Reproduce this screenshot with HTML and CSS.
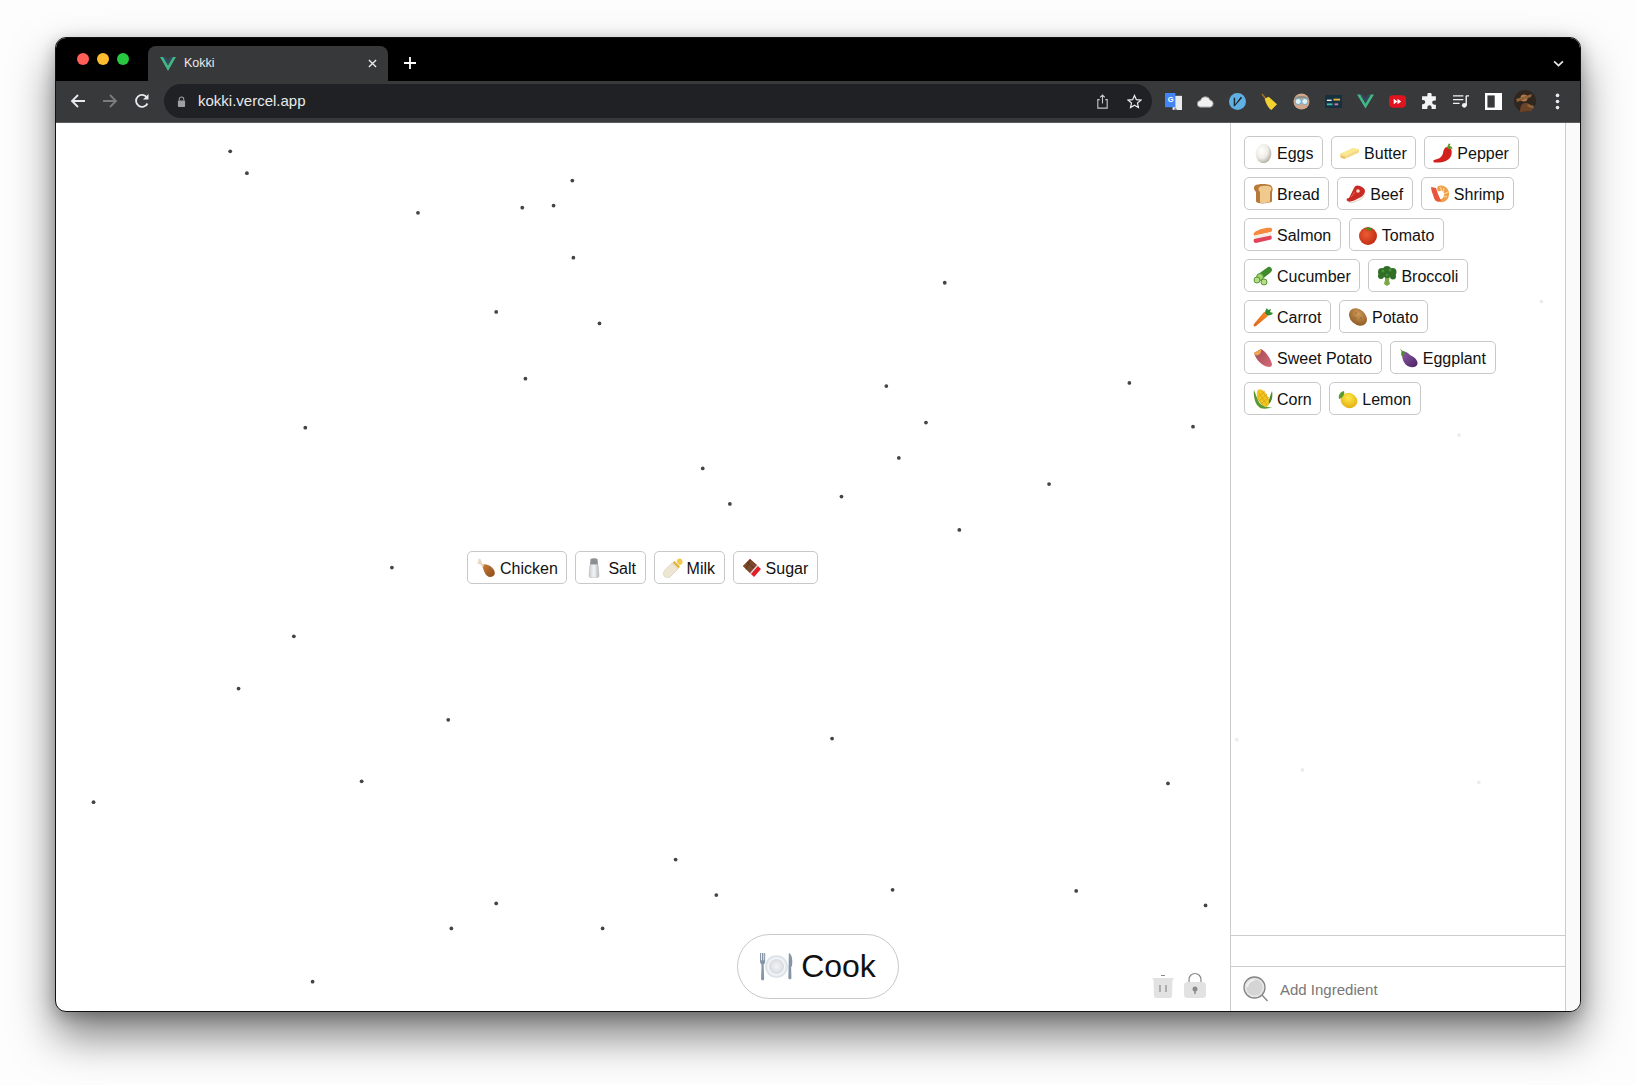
FILE: index.html
```html
<!DOCTYPE html>
<html lang="en">
<head>
    <meta charset="UTF-8">
    <title>Kokki</title>
    <link rel="stylesheet" href="styles.css">
</head>
<body>
    <!-- emoji drawn once, used by every chip -->
    <svg class="sprites" width="0" height="0">
        <defs>
            <radialGradient id="g-egg" cx="38%" cy="35%" r="72%"><stop offset="0" stop-color="#fff"/><stop offset=".55" stop-color="#eeece6"/><stop offset="1" stop-color="#aaa69c"/></radialGradient>
            <radialGradient id="g-tomato" cx="40%" cy="40%" r="70%"><stop offset="0" stop-color="#ee5a33"/><stop offset="1" stop-color="#b9290f"/></radialGradient>
            <radialGradient id="g-potato" cx="40%" cy="35%" r="75%"><stop offset="0" stop-color="#cf9a5a"/><stop offset="1" stop-color="#87541f"/></radialGradient>
            <radialGradient id="g-lemon" cx="40%" cy="35%" r="75%"><stop offset="0" stop-color="#ffe84d"/><stop offset="1" stop-color="#e0aa08"/></radialGradient>
            <radialGradient id="g-plate" cx="50%" cy="50%" r="50%"><stop offset="0" stop-color="#f2f4f6"/><stop offset=".62" stop-color="#d9dde2"/><stop offset=".7" stop-color="#f6f7f9"/><stop offset="1" stop-color="#d3dae4"/></radialGradient>
            <linearGradient id="g-drum" x1="0" y1="0" x2="1" y2="1"><stop offset="0" stop-color="#c9803c"/><stop offset="1" stop-color="#8c4a17"/></linearGradient>
            <linearGradient id="g-eggplant" x1="0" y1="0" x2="1" y2="1"><stop offset="0" stop-color="#8c5ba8"/><stop offset="1" stop-color="#4a2360"/></linearGradient>
            <linearGradient id="g-sweet" x1="0" y1="0" x2="1" y2="1"><stop offset="0" stop-color="#9c4a55"/><stop offset="1" stop-color="#d86a78"/></linearGradient>
            <linearGradient id="g-carrot" x1="1" y1="0" x2="0" y2="1"><stop offset="0" stop-color="#f58a2a"/><stop offset="1" stop-color="#e2641a"/></linearGradient>
            <linearGradient id="g-salt" x1="0" y1="0" x2="1" y2="0"><stop offset="0" stop-color="#c9ccd0"/><stop offset=".5" stop-color="#f4f5f6"/><stop offset="1" stop-color="#b4b8bc"/></linearGradient>
        </defs>
        <symbol id="egg" viewBox="0 0 20 20"><ellipse cx="10.500" cy="10.500" rx="7.800" ry="9.700" fill="url(#g-egg)"/></symbol>
        <symbol id="butter" viewBox="0 0 20 20"><path d="M0 11l13-6 6 1.500v3L6 15.500 1 14z" fill="#f3d98a"/><path d="M0 11l13-6 6 1.500L6 12.500z" fill="#fbe98f"/><path d="M0 12.500l5 1.500v2l-4-1z" fill="#eac25c"/></symbol>
        <symbol id="pepper" viewBox="0 0 20 20"><path d="M14 4c4 0 6 4 4 9-2 5-9 7-16 6.500-2 0-2-2-1-2.500 5-1 8-3 9-7 .5-3 2-6 4-6z" fill="#d3201c"/><path d="M14 5c.5-2 1-3.500 2-4.500l1.500.5-1 2c1.500 0 3 1 3 3.500-1-1-3-1.500-4-.5z" fill="#5d9a2e"/></symbol>
        <symbol id="bread" viewBox="0 0 20 20"><path d="M2 1.500c3-2 13-2 16 0 2 2 2 5 1 6.500v9.500c-2 2-15 3-16 0V8C1 6 0 3.500 2 1.500z" fill="#b77a38"/><path d="M7 2.500c3-1 9-1 11 .5 1 1.500 0 3.500-1 5v9.500c-2 1.500-8 2-10 1V8C5 6 5 4 7 2.500z" fill="#efc98e"/></symbol>
        <symbol id="beef" viewBox="0 0 20 20"><path d="M1 17c-1-2 0-3 2-3l5-10c1-3 4-3 6-2 3 1 5 3 5 5 0 3-3 6-6 7-4 2-9 5-12 3z" fill="#c92a24"/><path d="M1 16c1 2 4 3 8 1 4-1 8-3 10-8 0 4-3 7-7 8-4 2-8 3-10 1z" fill="#e8d8c8"/><circle cx="12" cy="7" r="1.800" fill="#f5dcc8"/><path d="M5 13l4-5" stroke="#e86a58" stroke-width="1"/></symbol>
        <symbol id="shrimp" viewBox="0 0 20 20"><path d="M8 2c6-2 11 2 11 8s-5 9-9 8c-2-1-2-3 0-3 3 0 4-2 4-5s-2-4-4-3C8 8 6 6 8 2z" fill="#f0a04b"/><path d="M1 3l5 1 2 6 3 7c-3 2-6 0-7-3-1-4-3-7-3-11z" fill="#e8553a"/><path d="M10 3l2 4M14 4l-1 4M18 8l-4 2M17 13l-4-1" stroke="#fbd79a" stroke-width="1.200"/></symbol>
        <symbol id="salmon" viewBox="0 0 20 20"><path d="M1 8c2-3 13-6 17-5 2 1 1 3 0 4L2 11c-1 0-2-2-1-3z" fill="#f58a3e"/><path d="M1 10.500l17-3.500c1 1 1 3 0 3.500L3 14c-1 0-3-2-2-3.500z" fill="#f6efe6"/><path d="M1 14l17-3.500c1 1.500 1 3 0 4L3 18c-2 0-3-2-2-4z" fill="#e0435a"/></symbol>
        <symbol id="tomato" viewBox="0 0 20 20"><circle cx="10" cy="11" r="9" fill="url(#g-tomato)"/><path d="M10 2l2 1 3 0-2 1.500 1 2-3-1.500-2 1.500 0-2-3-1 3-.5z" fill="#4e8a24"/></symbol>
        <symbol id="cucumber" viewBox="0 0 20 20"><path d="M4 9L15 1c2-1 4 1 4 3 0 1-1 2-2 3L8 14z" fill="#3f8a2c"/><circle cx="7" cy="11" r="3.400" fill="#a6d173" stroke="#4f9a33"/><circle cx="4" cy="14" r="3" fill="#b7dc85" stroke="#4f9a33"/><circle cx="11" cy="16" r="3" fill="#b7dc85" stroke="#4f9a33"/></symbol>
        <symbol id="broccoli" viewBox="0 0 20 20"><path d="M8 10h5l-1 4 1 4-3 2-3-2 1-4z" fill="#78a945"/><g fill="#2f6e26"><circle cx="5" cy="6" r="4"/><circle cx="10" cy="4" r="4"/><circle cx="15.500" cy="6" r="4"/><circle cx="4" cy="10" r="3"/><circle cx="16" cy="10.500" r="3"/><circle cx="10" cy="8.500" r="3.500"/></g><g fill="#4d9238"><circle cx="6" cy="5" r="1.500"/><circle cx="13" cy="4" r="1.500"/><circle cx="10" cy="9" r="1.300"/></g></symbol>
        <symbol id="carrot" viewBox="0 0 20 20"><path d="M11 5c2 0 4 2 4 4L3 19c-2 1-3 0-2-2z" fill="url(#g-carrot)"/><path d="M12 6c0-2 1-4 2-5l1 2 3-1-1 3 3 1c-1 2-4 3-6 2z" fill="#2e8b35"/></symbol>
        <symbol id="potato" viewBox="0 0 20 20"><ellipse cx="10" cy="10" rx="10" ry="7.500" transform="rotate(42 10 10)" fill="url(#g-potato)"/><g fill="#6d4318"><circle cx="8" cy="6" r=".6"/><circle cx="13" cy="11" r=".6"/><circle cx="7" cy="11" r=".6"/></g></symbol>
        <symbol id="sweet" viewBox="0 0 20 20"><path d="M1 5l7-4c4 2 9 8 11 15 0 2-1 3-3 3C9 18 3 12 1 5z" fill="url(#g-sweet)"/><path d="M1 5l7-4c1 2-1 6-3 6-2 1-3 0-4-2z" fill="#f2a64e"/></symbol>
        <symbol id="eggplant" viewBox="0 0 20 20"><path d="M4 4c3-1 5 1 7 3 2 1 6 3 7 6 2 4-2 7-6 6-4 0-7-4-8-7-1-2-1-5 0-8z" fill="url(#g-eggplant)"/><path d="M1 .5l2.500 2.500C5.500 3 7 4 7 5.500 6 5 5 5.500 4.500 6.500 4.500 8 4 9 3 8.500 2 7 2 5 2.500 3.500z" fill="#4e8a2c"/></symbol>
        <symbol id="corn" viewBox="0 0 20 20"><ellipse cx="10" cy="9" rx="5" ry="9.500" transform="rotate(-28 10 9)" fill="#f2c51f"/><path d="M6 4l8 12M9 2l8 11M4 8l7 10M6 12l8-7M8 15l8-7M5 8l7-6" stroke="#cf9a10" stroke-width=".6"/><path d="M1 1c2 5 3 8 5 12 2 3 6 6 13 5-4 2-11 3-14-1C2 14 0 6 1 1z" fill="#5d9a2e"/><path d="M19 2c1 5 0 10-3 13-1-2 1-8 3-13z" fill="#4a8a28"/></symbol>
        <symbol id="lemon" viewBox="0 0 20 20"><ellipse cx="11" cy="11.500" rx="8.500" ry="7.500" transform="rotate(25 11 11.500)" fill="url(#g-lemon)"/><path d="M1 10C0 6 2 3 6 2c1 3-1 7-5 8z" fill="#5d9a2e"/></symbol>
        <symbol id="chicken" viewBox="0 0 20 20"><path d="M6 7c3-2 9 0 12 5 2 4 0 7-4 7-4 0-6-5-8-12z" fill="url(#g-drum)"/><path d="M3 .5c1 0 2 1 2 2 1 .5 1 1.500.5 2L8 7.500 6.500 9.500 4 6c-1 .5-2.500 0-2.500-1S2 3.500 2.500 3c0-1 0-2.500.5-2.500z" fill="#e6d8c4"/></symbol>
        <symbol id="salt" viewBox="0 0 20 20"><path d="M6.500 1c2-1 5-1 7 0l.5 5.500H6z" fill="#8b8f94"/><path d="M6 6.500h8l1 12c-1 1.800-9 1.800-10 0z" fill="url(#g-salt)" stroke="#a8acb0" stroke-width=".5"/></symbol>
        <symbol id="milk" viewBox="0 0 20 20"><path d="M9 5l6 6-7 7c-2 2-5 2-6.500.5C0 17 0 14 2 12z" fill="#ece6d2" stroke="#c9c2ab" stroke-width=".5"/><path d="M9.500 4.500l6 6 1.500-2-5.500-5.500z" fill="#e3b23c"/><path d="M13.500 3.500C14 1 16 0 18 1s2 4 .5 5.500L16 7z" fill="#f2c94c"/></symbol>
        <symbol id="sugar" viewBox="0 0 20 20"><path d="M1 8l7-7 11 10-7 8z" fill="#e01f26"/><path d="M1 8l7-7 7 6-7 8z" fill="#7a4a2c"/><path d="M5 4l7 6M8 1.500l-4 10" stroke="#4f2e1a" stroke-width=".7"/><path d="M8 15l7-8 1 1-7 8z" fill="#ddd"/></symbol>
        <symbol id="plate" viewBox="0 0 34 32"><circle cx="17" cy="16" r="11" fill="url(#g-plate)"/><path d="M1 3v8c0 2 1 3 1.500 3l-.5 14c0 2 3 2 3 0l-.5-14c.5 0 1.500-1 1.500-3V3H5v7H4.300V3H2.800v7H2V3z" fill="#8595a8"/><path d="M29 3c3 1 4 7 3 13h-.8l.3 11c0 2-3 2-3 0z" fill="#8595a8"/></symbol>
        <symbol id="glass" viewBox="0 0 26 26"><circle cx="11.500" cy="11.500" r="10.500" fill="#e6e6e6" stroke="#858585" stroke-width="1.300"/><circle cx="11.500" cy="11.500" r="8" fill="#d5d5d5"/><path d="M4.500 11c0-4 3-7 7-7" fill="none" stroke="#f5f5f5" stroke-width="1.500"/><path d="M19 19l5.500 6" stroke="#8a8a8a" stroke-width="1.500"/></symbol>
    </svg>

    <div class="window">
        <div class="tab-strip">
            <div class="lights">
                <span class="light red"></span>
                <span class="light yellow"></span>
                <span class="light green"></span>
            </div>
            <div class="tab">
                <svg class="favicon" viewBox="0 0 16 14"><path d="M0 0h3.200L8 8.200 12.800 0H16L8 14z" fill="#41b883"/><path d="M3.200 0h2.900L8 3.400 9.900 0h2.900L8 8.200z" fill="#35495e"/></svg>
                <span class="tab-title">Kokki</span>
                <svg class="tab-close" viewBox="0 0 10 10"><path d="M1 1l8 8M9 1l-8 8" stroke="#e8eaed" stroke-width="1.500"/></svg>
            </div>
            <svg class="new-tab" viewBox="0 0 12 12"><path d="M6 0v12M0 6h12" stroke="#fff" stroke-width="1.800"/></svg>
            <svg class="tab-menu" viewBox="0 0 10 6"><path d="M1 1l4 4 4-4" fill="none" stroke="#e8eaed" stroke-width="1.500"/></svg>
        </div>

        <div class="toolbar">
            <svg class="nav" viewBox="0 0 16 16"><path d="M15 8H2M8 2L2 8l6 6" fill="none" stroke="#e8eaed" stroke-width="1.800"/></svg>
            <svg class="nav" viewBox="0 0 16 16"><path d="M1 8h13M8 2l6 6-6 6" fill="none" stroke="#7b7c7e" stroke-width="1.800"/></svg>
            <svg class="nav" viewBox="0 0 16 16"><path d="M13.500 10.500A6 6 0 1 1 13 4.500" fill="none" stroke="#e8eaed" stroke-width="1.800"/><path d="M14.500 1v5.500H9z" fill="#e8eaed"/></svg>
            <div class="address">
                <svg class="lock" viewBox="0 0 10 12"><path d="M2.500 5V3.500a2.500 2.500 0 0 1 5 0V5" fill="none" stroke="#9aa0a6" stroke-width="1.200"/><rect x="1" y="5" width="8" height="7" rx="1" fill="#9aa0a6"/></svg>
                <span class="url">kokki.vercel.app</span>
                <svg class="addr-icon share" viewBox="0 0 14 16"><path d="M4 6H2v9h10V6h-2M7 10V1M4.500 3.500L7 1l2.500 2.500" fill="none" stroke="#c4c6c9" stroke-width="1.200"/></svg>
                <svg class="addr-icon" viewBox="0 0 16 16"><path d="M8 1.500l2 4.500 4.800.5-3.600 3.200 1 4.800L8 12l-4.200 2.500 1-4.800L1.200 6.500 6 6z" fill="none" stroke="#e8eaed" stroke-width="1.300"/></svg>
            </div>
            <div class="extensions">
                <span class="ext"><svg viewBox="0 0 18 18"><rect x="8" y="3" width="10" height="15" fill="#e8eaed"/><path d="M0 0h11v15H0z" fill="#4285f4"/><text class="ext-g" x="3" y="9">G</text><path d="M11 15l-2 3h4z" fill="#8a8f96"/></svg></span>
                <span class="ext"><svg viewBox="0 0 18 14"><path d="M4 13a3.500 3.500 0 0 1-.5-7A5.500 5.500 0 0 1 14 5.500a3.800 3.800 0 0 1 0 7.500z" fill="#f1f1f1" stroke="#888" stroke-width="1"/></svg></span>
                <span class="ext"><svg viewBox="0 0 18 18"><circle cx="9" cy="9" r="9" fill="#5fb0e5"/><path d="M5 5h1.500v7l6-8 1.500 1-8 9H5z" fill="#20272c"/></svg></span>
                <span class="ext"><svg viewBox="0 0 18 18"><path d="M1 1l5 6" stroke="#a8741f" stroke-width="1.600"/><path d="M4 6l4-2 9 8-6 6c-3-2-6-7-7-12z" fill="#f2d22e"/></svg></span>
                <span class="ext"><svg viewBox="0 0 18 18"><circle cx="9" cy="9" r="8.500" fill="#d0a68c"/><path d="M1 7c1-5 15-5 16 0-4-2-12-2-16 0z" fill="#8c8c84"/><circle cx="5.500" cy="9" r="3.200" fill="#dff1f7" stroke="#6aa7c0"/><circle cx="12.500" cy="9" r="3.200" fill="#dff1f7" stroke="#6aa7c0"/></svg></span>
                <span class="ext"><svg viewBox="0 0 18 14"><rect width="18" height="14" rx="1" fill="#15303f"/><rect x="9" y="4" width="7" height="2" fill="#e8b23a"/><rect x="2" y="5" width="5" height="1.500" fill="#e8eaed"/><rect x="2" y="9" width="6" height="2" fill="#3fb6b0"/><rect x="10" y="9" width="4" height="2" fill="#c77fb0"/></svg></span>
                <span class="ext"><svg viewBox="0 0 18 15"><path d="M0 0h3.500L9 9.500 14.500 0H18L9 15z" fill="#41b883"/><path d="M3.500 0h3L9 4.500 11.500 0h3L9 9.500z" fill="#35495e"/></svg></span>
                <span class="ext"><svg viewBox="0 0 18 14"><rect width="18" height="13" y=".5" rx="4" fill="#e0141f"/><path d="M5 4l4 3-4 3zM9 4l4 3-4 3z" fill="#fff"/></svg></span>
                <span class="ext"><svg viewBox="0 0 16 16"><path d="M6 1.500a2 2 0 0 1 4 0V3h4v4h-1.500a2 2 0 0 0 0 4H14v4h-4v-1.500a2 2 0 0 0-4 0V15H1v-4.500h1a2 2 0 0 0 0-4H1V3h5z" fill="#f1f3f4"/></svg></span>
                <span class="ext"><svg viewBox="0 0 18 14"><path d="M0 1h11M0 5h11M0 9h7" stroke="#f1f3f4" stroke-width="1.500"/><path d="M14 1v10" stroke="#f1f3f4" stroke-width="1.500"/><path d="M14 1h3" stroke="#f1f3f4" stroke-width="1.500"/><circle cx="12" cy="11" r="2.500" fill="#f1f3f4"/></svg></span>
                <span class="ext"><svg viewBox="0 0 14 14"><path d="M0 0h14v14H0z" fill="#fff"/><rect x="2" y="2" width="6" height="10" fill="#38393b"/></svg></span>
                <span class="ext avatar-wrap"><svg viewBox="0 0 22 22"><circle cx="11" cy="11" r="11" fill="#2f2620"/><path d="M6 22c0-8 3-9 6-9s6 2 6 8z" fill="#6b4428"/><circle cx="10" cy="8" r="3.500" fill="#b57a48"/><path d="M2 9l16-5-1 3-14 5zM14 14l6 2-1 3-6-3z" fill="#8d6238"/></svg></span>
                <span class="ext"><svg viewBox="0 0 4 14"><circle cx="2" cy="2" r="1.500" fill="#e8eaed"/><circle cx="2" cy="7" r="1.500" fill="#e8eaed"/><circle cx="2" cy="12" r="1.500" fill="#e8eaed"/></svg></span>
            </div>
        </div>

        <div class="content">
            <!-- stray dots of the background, in the coordinates of the whole view -->
            <svg class="dots" viewBox="53 118 1461 851">
                <g fill="#444">
                    <circle cx="220" cy="145" r="1.800"/><circle cx="236" cy="166" r="1.800"/><circle cx="548" cy="173" r="1.800"/>
                    <circle cx="400" cy="204" r="1.800"/><circle cx="500" cy="199" r="1.800"/><circle cx="530" cy="197" r="1.800"/>
                    <circle cx="549" cy="247" r="1.800"/><circle cx="475" cy="299" r="1.800"/><circle cx="574" cy="310" r="1.800"/>
                    <circle cx="905" cy="271" r="1.800"/><circle cx="503" cy="363" r="1.800"/><circle cx="849" cy="370" r="1.800"/>
                    <circle cx="1082" cy="367" r="1.800"/><circle cx="292" cy="410" r="1.800"/><circle cx="887" cy="405" r="1.800"/>
                    <circle cx="1143" cy="409" r="1.800"/><circle cx="861" cy="439" r="1.800"/><circle cx="673" cy="449" r="1.800"/>
                    <circle cx="699" cy="483" r="1.800"/><circle cx="806" cy="476" r="1.800"/><circle cx="1005" cy="464" r="1.800"/>
                    <circle cx="919" cy="508" r="1.800"/><circle cx="375" cy="544" r="1.800"/><circle cx="281" cy="610" r="1.800"/>
                    <circle cx="228" cy="660" r="1.800"/><circle cx="429" cy="690" r="1.800"/><circle cx="797" cy="708" r="1.800"/>
                    <circle cx="346" cy="749" r="1.800"/><circle cx="1119" cy="751" r="1.800"/><circle cx="89" cy="769" r="1.800"/>
                    <circle cx="647" cy="824" r="1.800"/><circle cx="686" cy="858" r="1.800"/><circle cx="855" cy="853" r="1.800"/>
                    <circle cx="1031" cy="854" r="1.800"/><circle cx="475" cy="866" r="1.800"/><circle cx="432" cy="890" r="1.800"/>
                    <circle cx="577" cy="890" r="1.800"/><circle cx="1155" cy="868" r="1.800"/><circle cx="299" cy="941" r="1.800"/>
                </g>
                <g fill="#ececec">
                    <circle cx="1477" cy="289" r="1.800"/><circle cx="1398" cy="417" r="1.800"/><circle cx="1185" cy="709" r="1.800"/>
                    <circle cx="1248" cy="738" r="1.800"/><circle cx="1417" cy="750" r="1.800"/>
                </g>
            </svg>

            <div class="canvas">
                <div class="pot">
                    <div class="chip"><svg class="emoji"><use href="#chicken"/></svg>Chicken</div>
                    <div class="chip"><svg class="emoji"><use href="#salt"/></svg>Salt</div>
                    <div class="chip"><svg class="emoji"><use href="#milk"/></svg>Milk</div>
                    <div class="chip"><svg class="emoji"><use href="#sugar"/></svg>Sugar</div>
                </div>
                <button class="cook" type="button"><svg class="cook-icon"><use href="#plate"/></svg>Cook</button>
                <div class="tools">
                    <svg class="tool" viewBox="0 0 22 24"><path d="M9 1.500h4" stroke="#8a8a8a" stroke-width="1"/><path d="M0 4h22l-1.500 2-.5 16c0 1-1 2-2 2H4c-1 0-2-1-2-2L1.500 6z" fill="#e2e2e2"/><path d="M8 11v7M14 11v7" stroke="#8a8a8a" stroke-width="1.200"/></svg>
                    <svg class="tool" viewBox="0 0 22 26"><path d="M5 12V7.500a6 6 0 0 1 12 0V10" fill="none" stroke="#8a8a8a" stroke-width="1.200"/><rect y="10" width="22" height="16" rx="3.500" fill="#e2e2e2"/><circle cx="11" cy="17" r="2.500" fill="#8a8a8a"/><path d="M11 18v4" stroke="#8a8a8a" stroke-width="1.500"/></svg>
                </div>
            </div>

            <aside class="sidebar">
                <div class="ingredients">
                    <div class="chip"><svg class="emoji"><use href="#egg"/></svg>Eggs</div>
                    <div class="chip"><svg class="emoji"><use href="#butter"/></svg>Butter</div>
                    <div class="chip"><svg class="emoji"><use href="#pepper"/></svg>Pepper</div>
                    <div class="chip"><svg class="emoji"><use href="#bread"/></svg>Bread</div>
                    <div class="chip"><svg class="emoji"><use href="#beef"/></svg>Beef</div>
                    <div class="chip"><svg class="emoji"><use href="#shrimp"/></svg>Shrimp</div>
                    <div class="chip"><svg class="emoji"><use href="#salmon"/></svg>Salmon</div>
                    <div class="chip"><svg class="emoji"><use href="#tomato"/></svg>Tomato</div>
                    <div class="chip"><svg class="emoji"><use href="#cucumber"/></svg>Cucumber</div>
                    <div class="chip"><svg class="emoji"><use href="#broccoli"/></svg>Broccoli</div>
                    <div class="chip"><svg class="emoji"><use href="#carrot"/></svg>Carrot</div>
                    <div class="chip"><svg class="emoji"><use href="#potato"/></svg>Potato</div>
                    <div class="chip"><svg class="emoji"><use href="#sweet"/></svg>Sweet Potato</div>
                    <div class="chip"><svg class="emoji"><use href="#eggplant"/></svg>Eggplant</div>
                    <div class="chip"><svg class="emoji"><use href="#corn"/></svg>Corn</div>
                    <div class="chip"><svg class="emoji"><use href="#lemon"/></svg>Lemon</div>
                </div>
                <div class="spacer-row"></div>
                <div class="search-row">
                    <svg class="search-icon"><use href="#glass"/></svg>
                    <input class="search-input" type="text" placeholder="Add Ingredient">
                </div>
            </aside>
            <div class="gutter"></div>
        </div>
    </div>
</body>
</html>
```
FILE: styles.css
```css
body {
    margin: 0;
    padding: 37px 0 0 55px;
    height: 1085px;
    box-sizing: border-box;
    overflow: hidden;
    background-color: #fdfdfd;
    font-family: "Liberation Sans", Arial, sans-serif;
}
.sprites {
    position: absolute;
}
.window {
    width: 1526px;
    height: 975px;
    box-sizing: border-box;
    border: 1px solid #111;
    border-radius: 11px;
    overflow: hidden;
    background-color: #fff;
    display: flex;
    flex-direction: column;
    box-shadow: 0 24px 44px rgba(0, 0, 0, 0.5), 0 4px 16px rgba(0, 0, 0, 0.25);
}

/* tab strip */
.tab-strip {
    height: 43px;
    flex: none;
    background-color: #000;
    display: flex;
    align-items: flex-end;
    position: relative;
}
.lights {
    display: flex;
    gap: 8px;
    align-self: flex-start;
    margin: 15px 0 0 21px;
}
.light {
    width: 12px;
    height: 12px;
    border-radius: 50%;
}
.light.red {
    background-color: #ff5f57;
}
.light.yellow {
    background-color: #febc2e;
}
.light.green {
    background-color: #28c840;
}
.tab {
    width: 240px;
    height: 35px;
    margin-left: 19px;
    box-sizing: border-box;
    padding: 0 11px 0 12px;
    background-color: #37383a;
    border-radius: 8px 8px 0 0;
    display: flex;
    align-items: center;
    color: #e8eaed;
    font-size: 12.5px;
}
.favicon {
    width: 16px;
    height: 14px;
    margin-right: 8px;
}
.tab-title {
    flex: 1;
    padding-bottom: 1px;
}
.tab-close {
    width: 9px;
    height: 9px;
}
.new-tab {
    width: 12px;
    height: 12px;
    margin: 0 0 12px 16px;
}
.tab-menu {
    width: 11px;
    height: 7px;
    margin: 0 16px 14px auto;
}

/* toolbar */
.toolbar {
    height: 42px;
    flex: none;
    box-sizing: border-box;
    background-color: #38393b;
    border-bottom: 1px solid #5a5b5d;
    display: flex;
    align-items: center;
    padding-left: 14px;
}
.nav {
    width: 16px;
    height: 16px;
    margin: 0 16px 1px 0;
}
.address {
    width: 988px;
    height: 34px;
    margin: 0 0 1px -2px;
    box-sizing: border-box;
    background-color: #202124;
    border-radius: 17px;
    display: flex;
    align-items: center;
    padding: 0 10px 0 13px;
}
.lock {
    width: 9px;
    height: 11px;
    margin-right: 12px;
}
.url {
    flex: 1;
    color: #e8eaed;
    font-size: 15px;
    padding-bottom: 1px;
}
.addr-icon {
    width: 15px;
    height: 15px;
}
.share {
    margin-right: 17px;
}
.extensions {
    display: flex;
    margin: 0 0 1px 5px;
}
.ext {
    width: 32px;
    height: 32px;
    display: flex;
    align-items: center;
    justify-content: center;
}
.ext svg {
    width: 17px;
    height: 17px;
}
.ext .ext-g {
    font-size: 8px;
    font-weight: bold;
    fill: #fff;
}
.ext.avatar-wrap svg {
    width: 22px;
    height: 22px;
}

/* main area */
.content {
    flex: 1;
    min-height: 0;
    display: flex;
    position: relative;
}
.dots {
    position: absolute;
    left: -0.5px;
    top: 0;
    width: 1524px;
    height: 888px;
}
.canvas {
    width: 1174px;
    flex: none;
    position: relative;
}
.pot {
    position: absolute;
    left: 411px;
    top: 428px;
    display: flex;
    gap: 8px;
}
.chip {
    height: 33px;
    box-sizing: border-box;
    padding: 2px 8.6px 0 8px;
    background-color: #fff;
    border: 1px solid #c8c8c8;
    border-radius: 5px;
    display: flex;
    align-items: center;
    gap: 4px;
    font-size: 16px;
    color: #111;
    white-space: nowrap;
}
.emoji {
    width: 20px;
    height: 20px;
    flex: none;
    margin-top: -2px;
}
.cook {
    position: absolute;
    left: 681px;
    top: 811px;
    width: 162px;
    height: 65px;
    display: flex;
    align-items: center;
    justify-content: center;
    gap: 7px;
    padding: 0 1px 0 0;
    background-color: #fff;
    border: 1px solid #c8c8c8;
    border-radius: 33px;
    font-family: inherit;
    font-size: 32px;
    color: #111;
}
.cook-icon {
    width: 35px;
    height: 33px;
}
.tools {
    position: absolute;
    right: 24px;
    bottom: 13px;
    display: flex;
    align-items: flex-end;
    gap: 10px;
}
.tool {
    width: 22px;
    height: 24px;
}
.tool:last-child {
    height: 26px;
}
.sidebar {
    width: 336px;
    flex: none;
    box-sizing: border-box;
    border-left: 1px solid #ccc;
    border-right: 1px solid #ccc;
    display: flex;
    flex-direction: column;
    position: relative;
}
.ingredients {
    flex: 1;
    display: flex;
    flex-wrap: wrap;
    align-content: flex-start;
    gap: 8px;
    padding: 13px 13px;
}
.spacer-row {
    height: 31px;
    box-sizing: border-box;
    border-top: 1px solid #ccc;
    flex: none;
}
.search-row {
    height: 45px;
    flex: none;
    box-sizing: border-box;
    border-top: 1px solid #ccc;
    display: flex;
    align-items: center;
    padding-left: 12px;
    gap: 11px;
}
.search-icon {
    width: 26px;
    height: 26px;
}
.search-input {
    flex: 1;
    border: none;
    outline: none;
    padding: 0;
    font-family: inherit;
    font-size: 15px;
    color: #333;
    background: transparent;
}
.search-input::placeholder {
    color: #777;
}
.gutter {
    flex: 1;
    background-color: #fafafa;
}
```
